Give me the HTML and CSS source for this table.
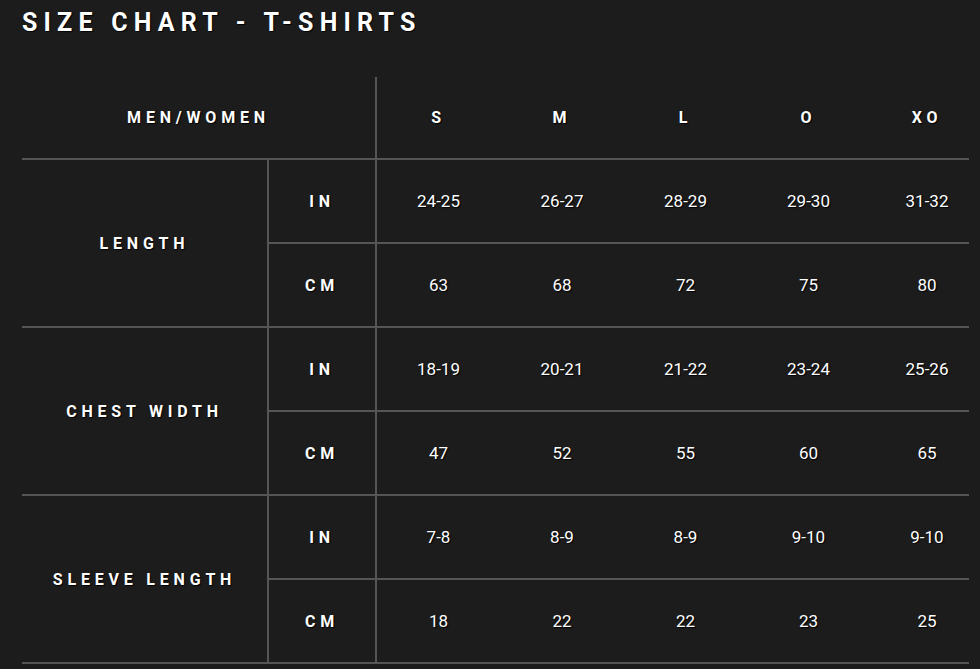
FILE: index.html
```html
<!DOCTYPE html>
<html lang="en">
<head>
<meta charset="utf-8">
<title>Size Chart - T-Shirts</title>
<link rel="stylesheet" href="styles.css">
</head>
<body>
<h1 class="title">SIZE CHART - T-SHIRTS</h1>
<div class="chart">
  <div class="cell head corner">MEN/WOMEN</div>
  <div class="cell head first">S</div>
  <div class="cell head">M</div>
  <div class="cell head">L</div>
  <div class="cell head">O</div>
  <div class="cell head last">XO</div>

  <div class="cell group">LENGTH</div>
  <div class="cell unit">IN</div>
  <div class="cell val first">24-25</div>
  <div class="cell val">26-27</div>
  <div class="cell val">28-29</div>
  <div class="cell val">29-30</div>
  <div class="cell val last">31-32</div>
  <div class="cell unit">CM</div>
  <div class="cell val first">63</div>
  <div class="cell val">68</div>
  <div class="cell val">72</div>
  <div class="cell val">75</div>
  <div class="cell val last">80</div>

  <div class="cell group">CHEST WIDTH</div>
  <div class="cell unit">IN</div>
  <div class="cell val first">18-19</div>
  <div class="cell val">20-21</div>
  <div class="cell val">21-22</div>
  <div class="cell val">23-24</div>
  <div class="cell val last">25-26</div>
  <div class="cell unit">CM</div>
  <div class="cell val first">47</div>
  <div class="cell val">52</div>
  <div class="cell val">55</div>
  <div class="cell val">60</div>
  <div class="cell val last">65</div>

  <div class="cell group">SLEEVE LENGTH</div>
  <div class="cell unit">IN</div>
  <div class="cell val first">7-8</div>
  <div class="cell val">8-9</div>
  <div class="cell val">8-9</div>
  <div class="cell val">9-10</div>
  <div class="cell val last">9-10</div>
  <div class="cell unit">CM</div>
  <div class="cell val first">18</div>
  <div class="cell val">22</div>
  <div class="cell val">22</div>
  <div class="cell val">23</div>
  <div class="cell val last">25</div>
</div>
</body>
</html>
```

FILE: styles.css
```css
html, body {
  margin: 0;
  padding: 0;
  background: #1c1c1c;
}

body {
  font-family: Roboto, "Liberation Sans", Arial, sans-serif;
  color: #ffffff;
  width: 980px;
  height: 669px;
  overflow: hidden;
}

.title {
  margin: 0;
  padding: 9px 0 0 22px;
  font-size: 25px;
  line-height: 28px;
  font-weight: 700;
  letter-spacing: 6.2px;
  text-shadow: 1px 1px 1px #000;
}

.chart {
  margin: 40px 0 0 22px;
  width: 947px;
  display: grid;
  grid-template-columns: 245px 108px 125px 124px 123px 123px 99px;
  grid-template-rows: 83px repeat(6, 84px);
}

.cell {
  box-sizing: border-box;
  display: flex;
  align-items: center;
  justify-content: center;
  border-bottom: 2px solid #555555;
  text-shadow: 1px 1px 1px #000;
}

.head,
.group,
.unit {
  font-size: 16px;
  font-weight: 700;
  letter-spacing: 0.3em;
}

.head.corner {
  grid-column: span 2;
}

.group {
  grid-row: span 2;
}

.unit {
  border-left: 2px solid #555555;
}

.first {
  border-left: 2px solid #555555;
}

.val {
  font-size: 17px;
  font-weight: 400;
}

.last {
  padding-left: 15px;
}
```
